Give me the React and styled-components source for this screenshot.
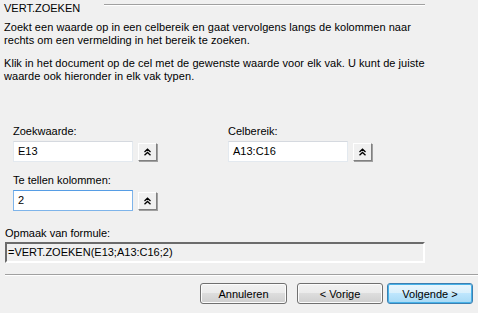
import React from "react";
import styled, { createGlobalStyle } from "styled-components";

const Global = createGlobalStyle`
  html, body { margin: 0; padding: 0; background: #f0f0f0; }
  body { font-family: "Liberation Sans", Arial, sans-serif; font-size: 11px; color: #000; }
  * { box-sizing: border-box; }
`;

const Dialog = styled.div`
  width: 478px;
  height: 313px;
  display: flex;
  flex-direction: column;
  padding: 2px 0 0 4px;
  line-height: 13px;
`;

const Header = styled.div`
  display: flex;
  align-items: center;
  gap: 24px;
  width: 421px;
  height: 13px;
`;

const Title = styled.span`
  white-space: nowrap;
`;

const Rule = styled.div`
  flex: 1;
  height: 2px;
  border-top: 1px solid #a0a0a0;
  border-bottom: 1px solid #fff;
  margin-top: -7px;
`;

const Para = styled.p`
  margin: ${(p) => p.$mt}px 0 0 0;
  line-height: 13px;
  letter-spacing: 0.05px;
`;

const Fields = styled.div`
  display: grid;
  grid-template-columns: 215px 215px;
  row-gap: 12px;
  margin: 42px 0 0 9px;
`;

const Field = styled.div`
  display: flex;
  flex-direction: column;
`;

const Label = styled.label`
  height: 13px;
  margin-bottom: 3px;
`;

const InputRow = styled.div`
  display: flex;
  align-items: center;
  gap: 5px;
`;

const Input = styled.div`
  width: 120px;
  height: 21px;
  background: #fff;
  border: 1px solid ${(p) => (p.$focus ? "#7eb4ea" : "#e3e9ef")};
  border-top-color: ${(p) => (p.$focus ? "#569de5" : "#d5d9df")};
  padding: 3px 0 0 4px;
  font-size: 11px;
`;

const ShrinkButton = styled.button`
  width: 19px;
  height: 18px;
  padding: 0;
  margin: 0;
  border: 1px solid;
  border-color: #fff #808080 #808080 #fff;
  box-shadow: 1px 1px 0 #a0a0a0;
  background: #f0f0f0;
  display: flex;
  align-items: center;
  justify-content: center;
`;

const FormulaLabel = styled.div`
  margin: 16px 0 0 1px;
  height: 13px;
`;

const FormulaBox = styled.div`
  margin: 2px 0 0 1px;
  width: 420px;
  height: 21px;
  border-top: 2px solid #6b6b6b;
  border-left: 2px solid #6b6b6b;
  border-right: 2px solid #fff;
  border-bottom: 2px solid #fff;
  padding: 2px 0 0 1px;
  white-space: nowrap;
`;

const Separator = styled.div`
  margin: 11px 0 0 1px;
  height: 2px;
  border-top: 1px solid #a0a0a0;
  border-bottom: 1px solid #fff;
`;

const Buttons = styled.div`
  display: flex;
  justify-content: flex-end;
  margin: 7px 5px 0 0;
`;

const Btn = styled.button`
  width: ${(p) => p.$w}px;
  height: 21px;
  margin-left: ${(p) => p.$ml}px;
  font-family: "Liberation Sans", Arial, sans-serif;
  font-size: 11px;
  color: #000;
  border: 1px solid ${(p) => (p.$default ? "#3c7fb1" : "#707070")};
  border-radius: 3px;
  background: ${(p) =>
    p.$default
      ? "linear-gradient(#eaf6fd 0%, #d9f0fc 49%, #bee6fd 50%, #a7d9f5 100%)"
      : "linear-gradient(#f2f2f2 0%, #ebebeb 49%, #dddddd 50%, #cfcfcf 100%)"};
  box-shadow: inset 0 0 0 1px ${(p) => (p.$default ? "#48b2e8" : "#fcfcfc")};
  padding: 0;
`;

const DoubleChevron = () => (
  <svg width="9" height="8" viewBox="0 0 9 8">
    <path d="M1.5 4 L4.5 1.2 L7.5 4 M1.5 7.3 L4.5 4.5 L7.5 7.3" fill="none" stroke="#000" strokeWidth="1.3" />
  </svg>
);

const FieldBlock = ({ label, value, focus }) => (
  <Field>
    <Label>{label}</Label>
    <InputRow>
      <Input $focus={focus}>{value}</Input>
      <ShrinkButton>
        <DoubleChevron />
      </ShrinkButton>
    </InputRow>
  </Field>
);

export default function App() {
  return (
    <>
      <Global />
      <Dialog>
        <Header>
          <Title>VERT.ZOEKEN</Title>
          <Rule />
        </Header>
        <Para $mt={6}>
          Zoekt een waarde op in een celbereik en gaat vervolgens langs de kolommen naar
          <br />
          rechts om een vermelding in het bereik te zoeken.
        </Para>
        <Para $mt={10}>
          Klik in het document op de cel met de gewenste waarde voor elk vak. U kunt de juiste
          <br />
          waarde ook hieronder in elk vak typen.
        </Para>
        <Fields>
          <FieldBlock label="Zoekwaarde:" value="E13" />
          <FieldBlock label="Celbereik:" value="A13:C16" />
          <FieldBlock label="Te tellen kolommen:" value="2" focus />
        </Fields>
        <FormulaLabel>Opmaak van formule:</FormulaLabel>
        <FormulaBox>=VERT.ZOEKEN(E13;A13:C16;2)</FormulaBox>
        <Separator />
        <Buttons>
          <Btn $w={87} $ml={0}>Annuleren</Btn>
          <Btn $w={86} $ml={10}>&lt; Vorige</Btn>
          <Btn $w={86} $ml={4} $default>Volgende &gt;</Btn>
        </Buttons>
      </Dialog>
    </>
  );
}
